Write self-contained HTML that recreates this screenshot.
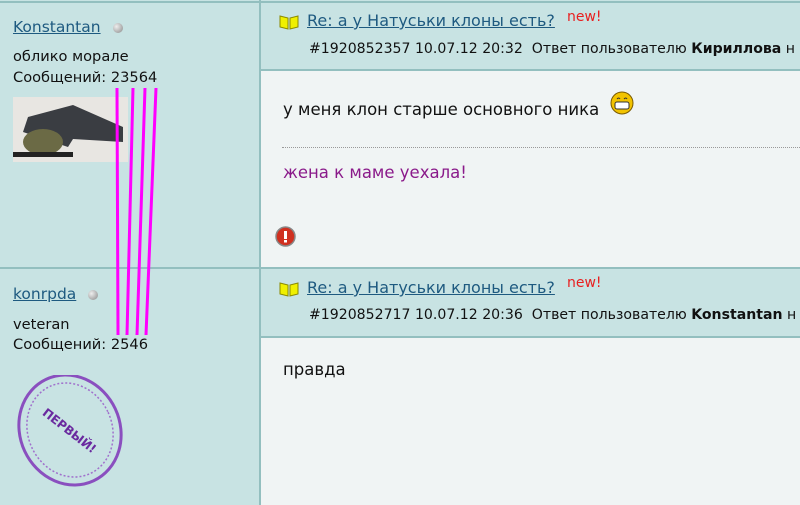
<!DOCTYPE html>
<html><head><meta charset="utf-8"><style>
body{margin:0;width:800px;height:505px;overflow:hidden;background:#c8e3e3;font-family:"DejaVu Sans","Liberation Sans",sans-serif;font-size:14.6px;color:#111;position:relative}
.abs{position:absolute;white-space:nowrap}
a{color:#1e5a80;text-decoration:underline}
.vline{left:259px;width:2px;background:#93bfbf}
.hline{height:2px;background:#93bfbf;left:0;width:800px}
.body{left:261px;width:539px;background:#f0f4f4}
.new{color:#e82020;font-size:14px}
.dot{display:inline-block;width:10px;height:10px;border-radius:50%;background:radial-gradient(circle at 35% 35%,#eee,#888);vertical-align:middle;margin-left:12px}
.big{font-size:16.5px}
</style></head><body>
<div class="abs hline" style="top:1px"></div>
<div class="abs body" style="top:70px;height:197px"></div>
<div class="abs hline" style="top:69px;left:261px"></div>
<div class="abs hline" style="top:267px"></div>
<div class="abs body" style="top:337px;height:168px"></div>
<div class="abs hline" style="top:336px;left:261px"></div>
<div class="abs vline" style="top:0;height:505px"></div>

<div class="abs" style="left:13px;top:18px;font-size:15.5px"><a>Konstantan</a><span class="dot"></span></div>
<div class="abs" style="left:13px;top:48px">облико морале</div>
<div class="abs" style="left:13px;top:69px">Сообщений: 23564</div>
<svg class="abs" style="left:13px;top:97px" width="115" height="65"><rect width="115" height="65" fill="#e8e6e2"/><path d="M15 20 L60 8 L110 30 L110 45 L60 42 L55 50 L10 35Z" fill="#3a3d42"/><ellipse cx="30" cy="45" rx="20" ry="13" fill="#6b6a45"/><rect x="0" y="55" width="60" height="5" fill="#222"/></svg>

<div class="abs" style="left:13px;top:285px;font-size:15.5px"><a>konrpda</a><span class="dot"></span></div>
<div class="abs" style="left:13px;top:316px">veteran</div>
<div class="abs" style="left:13px;top:336px">Сообщений: 2546</div>
<svg class="abs" style="left:15px;top:375px" width="115" height="115"><ellipse cx="55" cy="55" rx="50" ry="56" transform="rotate(-25 55 55)" fill="none" stroke="#8a4fbf" stroke-width="3"/><ellipse cx="55" cy="55" rx="42" ry="48" transform="rotate(-25 55 55)" fill="none" stroke="#a070cc" stroke-width="1.5" stroke-dasharray="2 2"/><text x="55" y="60" text-anchor="middle" transform="rotate(38 55 55)" font-size="12" font-weight="bold" fill="#6a2a9f" font-family="DejaVu Sans">ПЕРВЫЙ!</text></svg>

<svg class="abs" style="left:279px;top:14px" width="20" height="16"><path d="M1 2 L9 4 L9 15 L1 13Z M19 2 L11 4 L11 15 L19 13Z" fill="#f0f000" stroke="#8a8a00"/></svg>
<div class="abs" style="left:307px;top:11px;font-size:16px"><a>Re: а у Натуськи клоны есть? </a></div>
<div class="abs new" style="left:567px;top:9px">new!</div>
<div class="abs" style="left:309px;top:41px;font-size:14.1px">#1920852357 10.07.12 20:32 &nbsp;Ответ пользователю <b>Кириллова</b> н</div>
<div class="abs big" style="left:283px;top:100px">у меня клон старше основного ника</div>
<svg class="abs" style="left:610px;top:91px" width="25" height="25"><circle cx="12" cy="12" r="11" fill="#f2c300" stroke="#7a5a00"/><rect x="5" y="11" width="14" height="7" rx="2" fill="#fff" stroke="#333"/><path d="M7 8 Q9 6 10 8 M14 8 Q16 6 17 8" stroke="#333" fill="none"/></svg>
<div class="abs" style="left:282px;top:147px;width:518px;border-top:1px dotted #999"></div>
<div class="abs big" style="left:283px;top:163px;color:#8a1a8a">жена к маме уехала!</div>
<svg class="abs" style="left:275px;top:226px" width="21" height="21"><circle cx="10.5" cy="10.5" r="9.5" fill="#d03020" stroke="#888" stroke-width="1.5"/><rect x="9" y="5" width="3" height="8" fill="#fff"/><rect x="9" y="14" width="3" height="2.5" fill="#fff"/></svg>

<svg class="abs" style="left:279px;top:281px" width="20" height="16"><path d="M1 2 L9 4 L9 15 L1 13Z M19 2 L11 4 L11 15 L19 13Z" fill="#f0f000" stroke="#8a8a00"/></svg>
<div class="abs" style="left:307px;top:278px;font-size:16px"><a>Re: а у Натуськи клоны есть? </a></div>
<div class="abs new" style="left:567px;top:275px">new!</div>
<div class="abs" style="left:309px;top:307px;font-size:14.1px">#1920852717 10.07.12 20:36 &nbsp;Ответ пользователю <b>Konstantan</b> н</div>
<div class="abs big" style="left:283px;top:360px">правда</div>

<svg class="abs" style="left:0;top:0" width="800" height="505"><g stroke="#ff00ff" stroke-width="3" fill="none"><path d="M117 88 L118 335"/><path d="M133 88 L127 335"/><path d="M145 88 L137 335"/><path d="M156 88 L146 335"/></g></svg>
</body></html>
